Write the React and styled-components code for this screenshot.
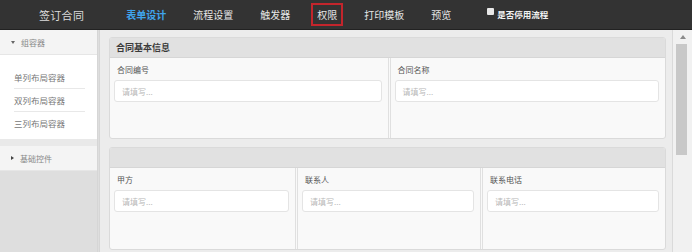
import React from "react";
import styled, { createGlobalStyle } from "styled-components";

const GlobalStyle = createGlobalStyle`
  html, body {
    margin: 0;
    padding: 0;
    width: 692px;
    height: 252px;
    overflow: hidden;
    background: #ececec;
    font-family: "Noto Sans CJK SC", "Noto Sans", sans-serif;
  }
`;

const Page = styled.div`
  width: 692px;
  height: 252px;
  display: flex;
  flex-direction: column;
`;

const Header = styled.div`
  height: 30px;
  flex: none;
  background: #333333;
  border-bottom: 1px solid #222;
  box-sizing: border-box;
  display: flex;
  align-items: center;
  padding-left: 39px;
`;

const Title = styled.div`
  font-size: 11px;
  letter-spacing: 0.3px;
  color: #dcdcdc;
  margin-right: 36px;
`;

const Nav = styled.div`
  display: flex;
  align-items: center;
  gap: 15px;
`;

const Tab = styled.div`
  font-size: 10px;
  line-height: 13px;
  padding: 3px 4px;
  border: 2px solid ${(p) => (p.$boxed ? "#c3252c" : "transparent")};
  color: ${(p) => (p.$active ? "#3fa4ec" : "#e6e6e6")};
  font-weight: ${(p) => (p.$active ? "bold" : "normal")};
`;

const Toggle = styled.label`
  display: flex;
  align-items: center;
  margin-left: 30px;
  font-size: 8.5px;
  font-weight: bold;
  color: #f2f2f2;
  margin-top: -2px;
`;

const Box = styled.span`
  width: 7px;
  height: 7px;
  background: #e8e8e8;
  border-radius: 1px;
  margin-right: 3px;
  margin-top: -4px;
`;

const Body = styled.div`
  flex: 1;
  display: flex;
  min-height: 0;
`;

const Sidebar = styled.div`
  width: 100px;
  flex: none;
  box-sizing: border-box;
  border-right: 3px double #d6d6d6;
  background: #dedede;
  display: flex;
  flex-direction: column;
`;

const GroupHead = styled.div`
  height: 25px;
  box-sizing: border-box;
  background: #f4f4f4;
  border-bottom: 1px solid #e6e6e6;
  display: flex;
  align-items: center;
  padding-left: 11px;
  font-size: 8px;
  color: #888;
`;

/* small disclosure triangle, pointing down when open */
const Caret = styled.span`
  width: 0;
  height: 0;
  margin-right: 6px;
  ${(p) =>
    p.$open
      ? `border-left: 2.5px solid transparent;
         border-right: 2.5px solid transparent;
         border-top: 3px solid #666;`
      : `border-top: 2.5px solid transparent;
         border-bottom: 2.5px solid transparent;
         border-left: 3px solid #444;`}
`;

const List = styled.div`
  background: #fff;
  padding: 11px 12px 5px 14px;
`;

const Item = styled.div`
  height: 22px;
  line-height: 22px;
  font-size: 8.5px;
  color: #777;
  & + & {
    border-top: 1px solid #e8e8e8;
  }
`;

const Band = styled.div`
  height: 7px;
  background: #e9e9e9;
`;

const Main = styled.div`
  flex: 1;
  box-sizing: border-box;
  padding: 7px 6px 0 9px;
  border-right: 1px solid #dadada;
  display: flex;
  flex-direction: column;
  gap: 8px;
  overflow: hidden;
`;

const Panel = styled.div`
  border: 1px solid #dadada;
  border-radius: 3px;
  background: #f9f9f9;
  overflow: hidden;
  flex: none;
`;

const PanelHead = styled.div`
  height: 20px;
  box-sizing: border-box;
  background: #e1e1e1;
  border-bottom: 1px solid #d6d6d6;
  display: flex;
  align-items: center;
  padding-left: 6px;
  font-size: 9px;
  font-weight: bold;
  color: #3a3a3a;
`;

const Row = styled.div`
  display: grid;
  grid-template-columns: repeat(${(p) => p.$cols}, 1fr);
  height: ${(p) => p.$h}px;
`;

const Cell = styled.div`
  padding: 7px 6px 0 4px;
  & + & {
    border-left: 3px double #e0e0e0;
  }
`;

const Label = styled.div`
  font-size: 8px;
  line-height: 10px;
  color: #555;
  padding-left: 3px;
  margin-bottom: 5px;
`;

const Input = styled.div`
  height: 22px;
  box-sizing: border-box;
  background: #fff;
  border: 1px solid #e4e4e4;
  border-radius: 3px;
  display: flex;
  align-items: center;
  padding-left: 7px;
  font-size: 8px;
  color: #b8b8b8;
`;

const Scroll = styled.div`
  width: 19px;
  flex: none;
  background: #f1f1f1;
  display: flex;
  flex-direction: column;
  align-items: center;
  padding-top: 3px;
  box-sizing: border-box;
`;

const Arrow = styled.div`
  width: 0;
  height: 0;
  border-left: 3px solid transparent;
  border-right: 3px solid transparent;
  border-bottom: 4px solid #8a8a8a;
  margin: 2px 0 5px 0;
`;

const Thumb = styled.div`
  width: 11px;
  height: 111px;
  background: #c8c8c8;
  margin-left: -2px;
`;

const tabs = ["表单设计", "流程设置", "触发器", "权限", "打印模板", "预览"];

function Field({ label }) {
  return (
    <Cell>
      <Label>{label}</Label>
      <Input>请填写...</Input>
    </Cell>
  );
}

export default function App() {
  return (
    <Page>
      <GlobalStyle />
      <Header>
        <Title>签订合同</Title>
        <Nav>
          {tabs.map((t, i) => (
            <Tab key={t} $active={i === 0} $boxed={t === "权限"}>
              {t}
            </Tab>
          ))}
        </Nav>
        <Toggle>
          <Box />
          是否停用流程
        </Toggle>
      </Header>
      <Body>
        <Sidebar>
          <GroupHead>
            <Caret $open />组容器
          </GroupHead>
          <List>
            <Item>单列布局容器</Item>
            <Item>双列布局容器</Item>
            <Item>三列布局容器</Item>
          </List>
          <Band />
          <GroupHead>
            <Caret />基础控件
          </GroupHead>
        </Sidebar>
        <Main>
          <Panel>
            <PanelHead>合同基本信息</PanelHead>
            <Row $cols={2} $h={80}>
              <Field label="合同编号" />
              <Field label="合同名称" />
            </Row>
          </Panel>
          <Panel>
            <PanelHead />
            <Row $cols={3} $h={81}>
              <Field label="甲方" />
              <Field label="联系人" />
              <Field label="联系电话" />
            </Row>
          </Panel>
        </Main>
        <Scroll>
          <Arrow />
          <Thumb />
        </Scroll>
      </Body>
    </Page>
  );
}
